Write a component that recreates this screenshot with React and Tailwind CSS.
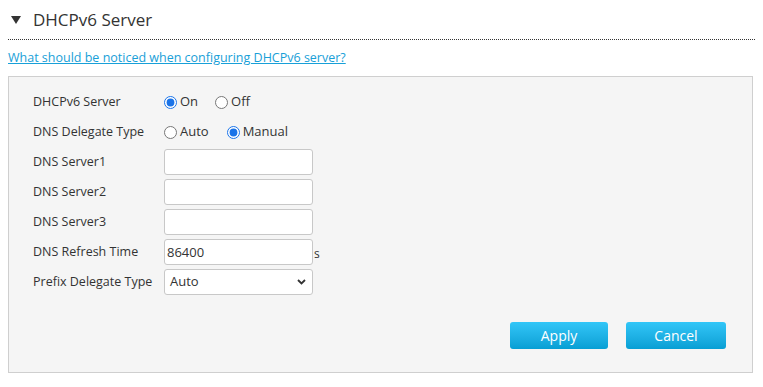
import React from 'react'

const font = { fontFamily: '"Open Sans", "Noto Sans", sans-serif' }

function Radio({ checked, label, name, className = '' }) {
  return (
    <label className={`flex items-center ${className}`}>
      <input type="radio" name={name} defaultChecked={checked} className="m-0 w-[13px] h-[13px] accent-[#1a73e8]" />
      <span className="ml-[3px] text-[13px] text-[#333]">{label}</span>
    </label>
  )
}

function Row({ label, children }) {
  return (
    <div className="flex items-center h-[30px]">
      <div className="w-[131px] text-[12.5px] text-[#333]">{label}</div>
      {children}
    </div>
  )
}

const inputCls = 'w-[149px] h-[26px] bg-white border border-[#c8c8c8] rounded-[3px] px-[2px] text-[13px] text-[#333] outline-none'

export default function App() {
  return (
    <div className="w-[763px] h-[387px] bg-white" style={font}>
      <div className="px-[8px]">
        <div className="flex items-center h-[40px] border-b border-dotted border-[#333]">
          <span className="ml-[3px] w-0 h-0 border-l-[5px] border-r-[5px] border-t-[8px] border-l-transparent border-r-transparent border-t-[#333]" />
          <span className="ml-[12px] text-[17px] text-[#333] leading-none">DHCPv6 Server</span>
        </div>
        <div className="h-[36px] flex items-center">
          <a href="#" className="text-[12.5px] text-[#18a0d8] underline">What should be noticed when configuring DHCPv6 server?</a>
        </div>
        <div className="w-[745px] h-[297px] border border-[#cfcfcf] bg-[#f5f5f5] pt-[10px] pl-[24px] pr-[25px]">
          <Row label="DHCPv6 Server">
            <Radio name="srv" checked label="On" />
            <Radio name="srv" label="Off" className="ml-[17px]" />
          </Row>
          <Row label="DNS Delegate Type">
            <Radio name="dns" label="Auto" />
            <Radio name="dns" checked label="Manual" className="ml-[18px]" />
          </Row>
          <Row label="DNS Server1"><input className={inputCls} /></Row>
          <Row label="DNS Server2"><input className={inputCls} /></Row>
          <Row label="DNS Server3"><input className={inputCls} /></Row>
          <Row label="DNS Refresh Time">
            <input className={inputCls} defaultValue="86400" />
            <span className="text-[12px] text-[#333] ml-[1px] mt-[4px]">s</span>
          </Row>
          <Row label="Prefix Delegate Type">
            <div className="relative w-[149px] h-[26px] bg-white border border-[#c8c8c8] rounded-[3px] flex items-center pl-[5px] text-[13px] text-[#333]">
              Auto
              <svg className="absolute right-[6px] top-[9px]" width="9" height="6" viewBox="0 0 9 6">
                <path d="M1 1l3.5 3.5L8 1" fill="none" stroke="#333" strokeWidth="1.8" />
              </svg>
            </div>
          </Row>
          <div className="flex justify-end gap-[18px] mt-[25px] pr-[1px]">
            <button className="w-[98px] h-[27px] rounded-[3px] bg-gradient-to-b from-[#31c6f8] to-[#069fd4] text-white text-[14px]">Apply</button>
            <button className="w-[100px] h-[27px] rounded-[3px] bg-gradient-to-b from-[#31c6f8] to-[#069fd4] text-white text-[14px]">Cancel</button>
          </div>
        </div>
      </div>
    </div>
  )
}
